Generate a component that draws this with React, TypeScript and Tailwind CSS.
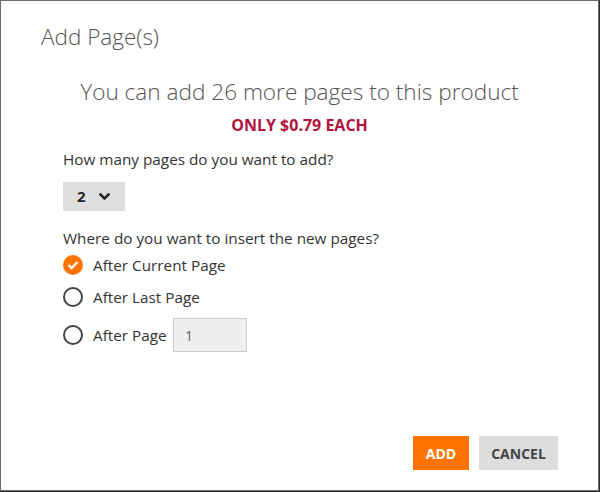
import React from "react";

export default function App() {
  const font = { fontFamily: '"Open Sans", "Noto Sans", sans-serif' };
  return (
    <div className="w-[600px] h-[492px] bg-[#2f2f2f]" style={font}>
      <div className="w-[599px] h-[491px] bg-white border border-[#6a6a6a] flex flex-col">
        <div className="pl-[40px] pt-[20px] text-[22.5px] font-light text-[#555] leading-[32px]">Add Page(s)</div>
        <div className="mt-[24px] text-center text-[22.6px] font-light text-[#555] leading-[30px]">
          You can add 26 more pages to this product
        </div>
        <div className="mt-[8px] text-center text-[16px] font-bold text-[#b3123e] leading-[20px]">ONLY $0.79 EACH</div>
        <div className="pl-[62px] mt-[14px] flex flex-col items-start text-[15.3px] text-[#333]">
          <div className="leading-[20px]">How many pages do you want to add?</div>
          <div className="mt-[13px] w-[62px] h-[29px] bg-[#dedede] flex items-center pl-[14px] gap-[12px]">
            <span className="font-bold text-[15px] text-[#222]">2</span>
            <svg width="13" height="9" viewBox="0 0 13 9">
              <path d="M1.6 1.6 L6.5 6.5 L11.4 1.6" fill="none" stroke="#222" strokeWidth="2.5" />
            </svg>
          </div>
          <div className="mt-[17px] leading-[20px]">Where do you want to insert the new pages?</div>
          <div className="mt-[5px] flex items-center h-[24px]">
            <span className="w-[20px] h-[20px] rounded-full bg-[#ff7300] flex items-center justify-center">
              <svg width="12" height="10" viewBox="0 0 12 10">
                <path d="M1.5 5 L4.5 8 L10.5 2" fill="none" stroke="white" strokeWidth="2.4" />
              </svg>
            </span>
            <span className="ml-[10px]">After Current Page</span>
          </div>
          <div className="mt-[8px] flex items-center h-[24px]">
            <span className="w-[20px] h-[20px] rounded-full border-2 border-[#444]" />
            <span className="ml-[10px]">After Last Page</span>
          </div>
          <div className="mt-[9px] flex items-center h-[34px]">
            <span className="w-[20px] h-[20px] rounded-full border-2 border-[#444]" />
            <span className="ml-[10px]">After Page</span>
            <div className="ml-[6px] w-[74px] h-[34px] bg-[#eeeeee] border border-[#cccccc] flex items-center pl-[11px] text-[15px] text-[#666]">1</div>
          </div>
        </div>
        <div className="flex-1" />
        <div className="flex justify-end gap-[10px] pr-[40px] pb-[20px]">
          <button className="w-[56px] h-[34px] bg-[#ff7300] text-white font-bold text-[14px]">ADD</button>
          <button className="w-[79px] h-[34px] bg-[#dddddd] text-[#444] font-bold text-[14px]">CANCEL</button>
        </div>
      </div>
    </div>
  );
}
